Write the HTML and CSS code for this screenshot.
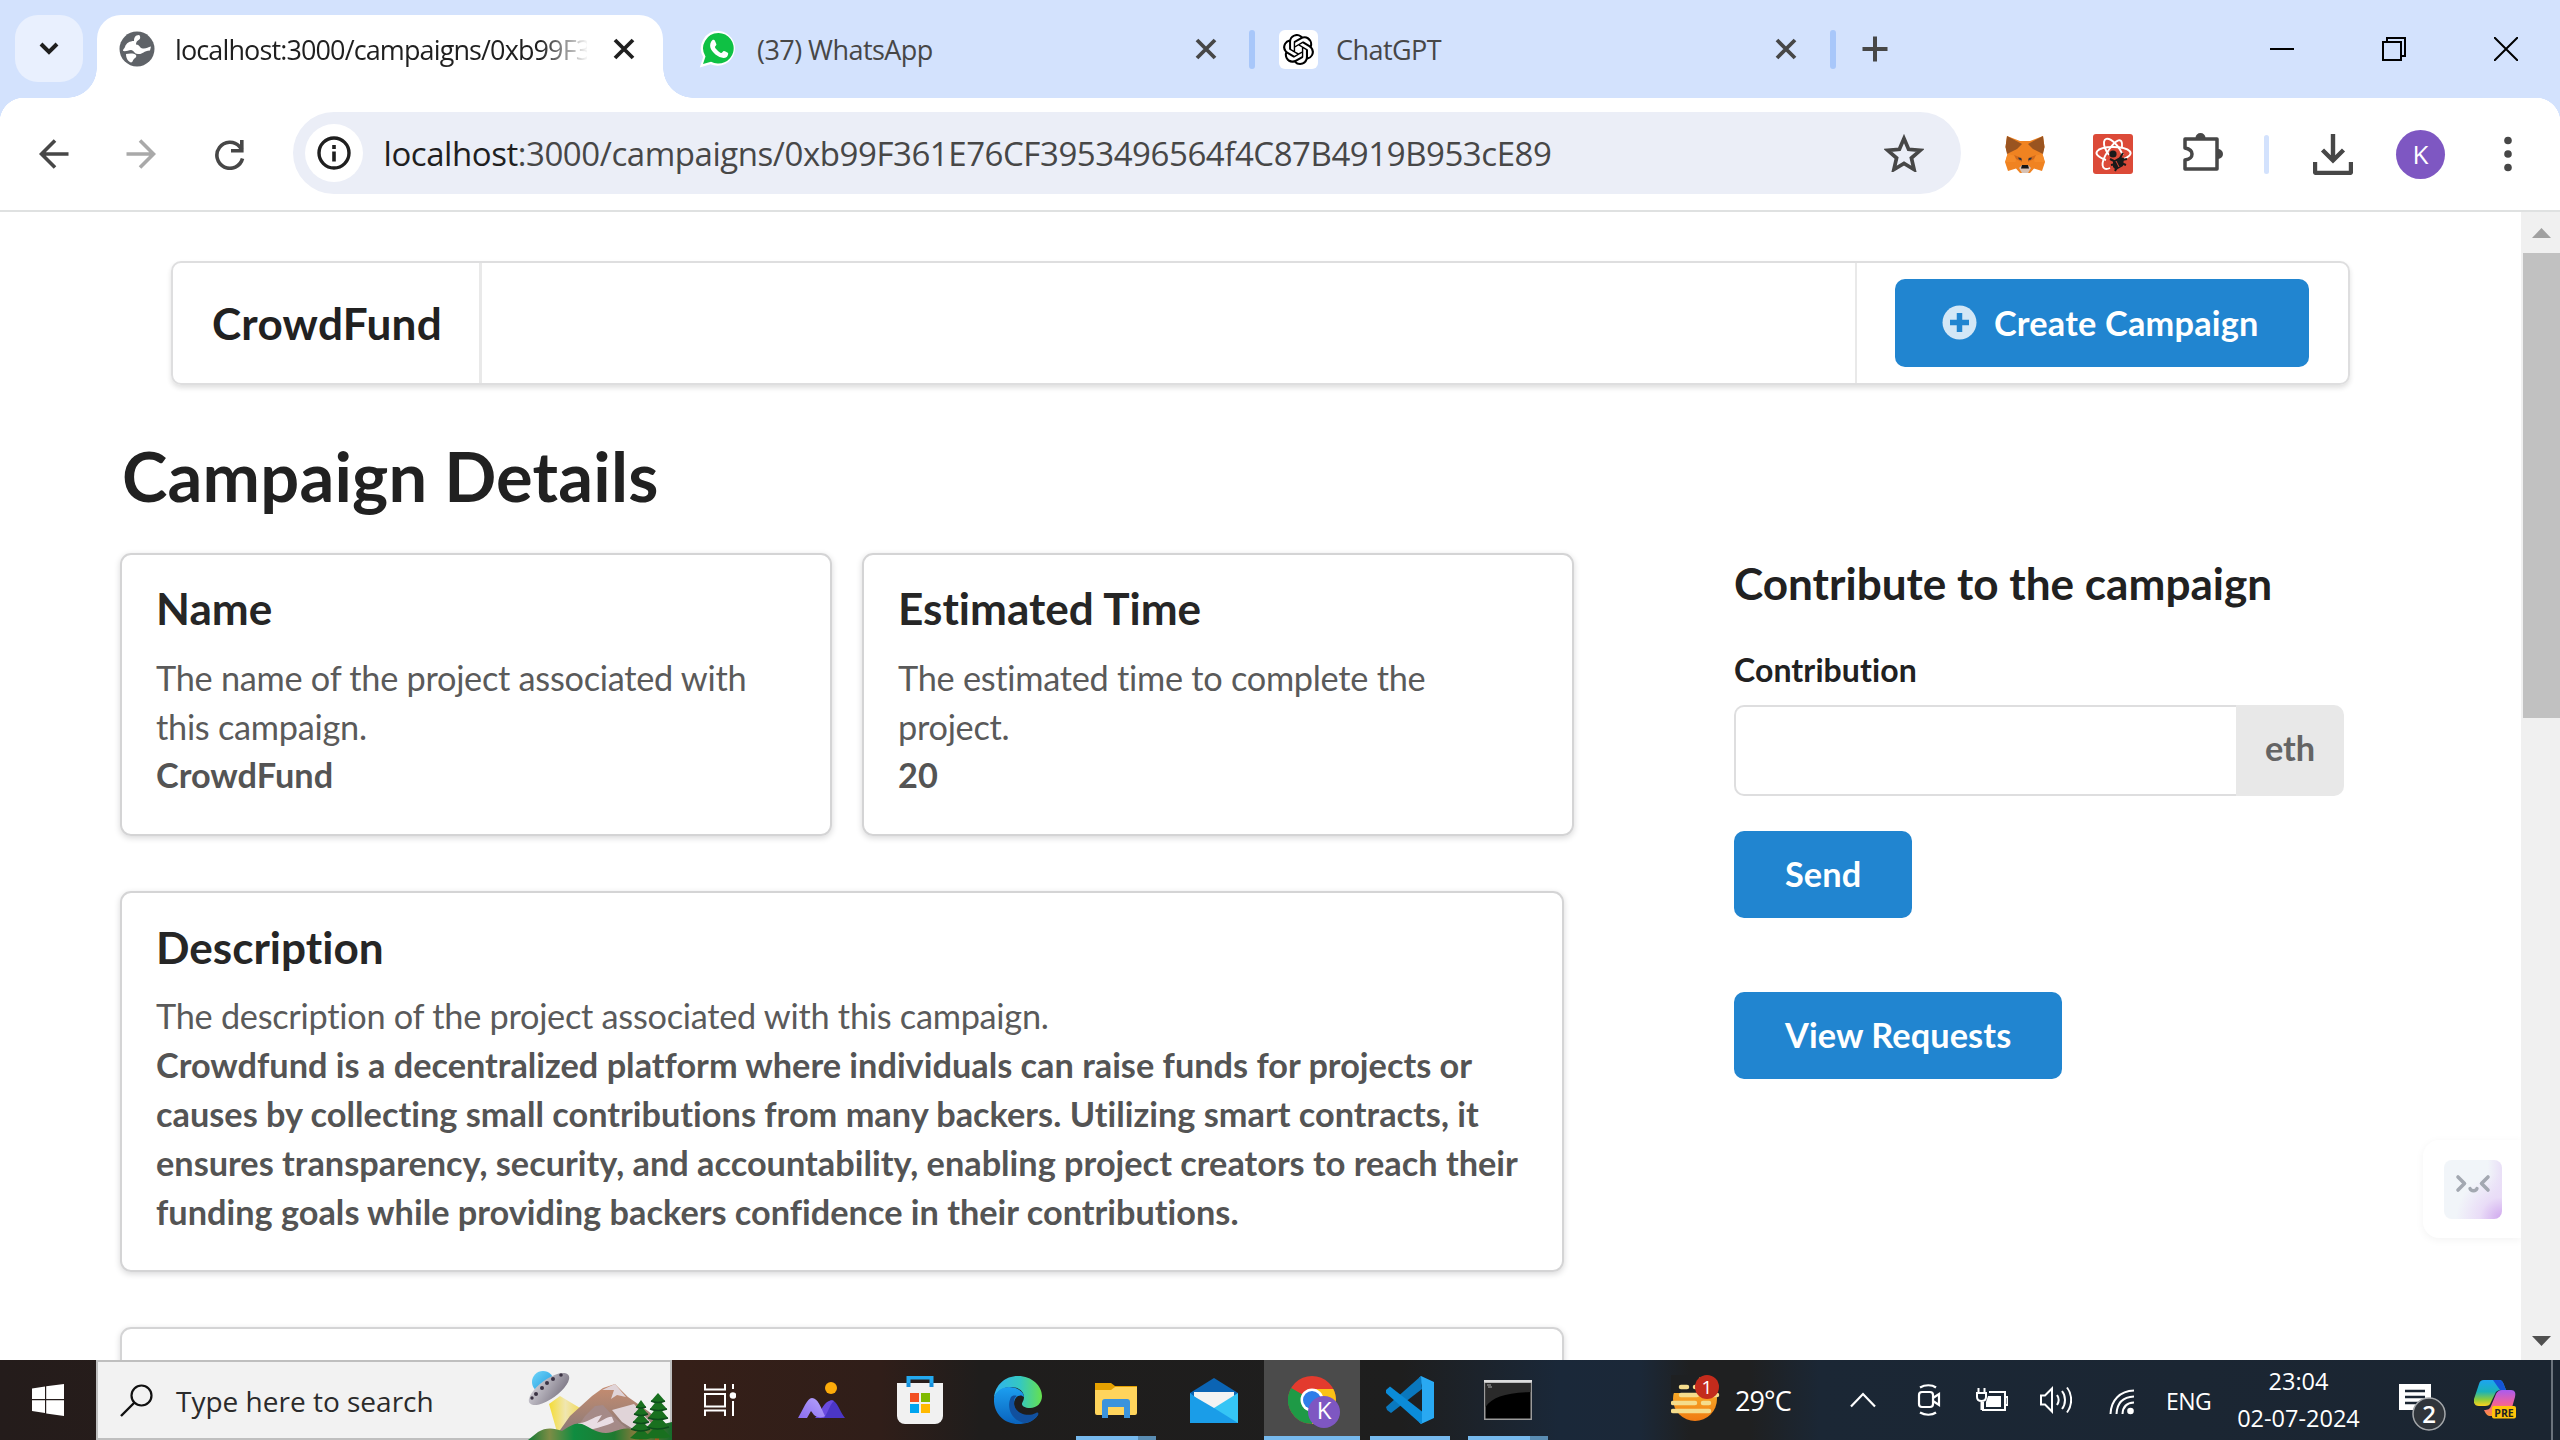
FILE: index.html
```html
<!DOCTYPE html>
<html lang="en">
<head>
<meta charset="utf-8">
<title>CrowdFund</title>
<link rel="stylesheet" href="styles.css">
</head>
<body>
<header class="strip">
  <div class="tab-search"><svg width="20" height="14" viewBox="0 0 20 14"><path d="M2 2l8 8 8-8" fill="none" stroke="#1f1f1f" stroke-width="4"/></svg></div>
  <div class="tab active">
    <svg class="favicon" width="36" height="36" viewBox="0 0 36 36"><circle cx="18" cy="18" r="17.500" fill="#5f6368"/><path d="M20 4c-4 0-5 3-5 6-4 0-8 2-9 6-1 2-2 2-2 4 3 .5 5-.5 8-1 3 0 3 4 7 4 5 .5 5-3 12-3.500l1-4c-3 .5-5 2.500-8 2-4-.5-3-4-7-4 0-4 3-4 4-6 .5-1.500 0-3-1-3.500zM7 23c3-.5 8-1 10 1 1 2-1 3-2 4-1.500 1.500-1 3-3 3.500-3-1-5-4.500-5-8.500z" fill="#fff"/></svg>
    <span class="tab-title fade">localhost:3000/campaigns/0xb99F3</span>
    <svg class="close" width="24" height="24" viewBox="0 0 24 24"><path d="M3 3l18 18M21 3L3 21" stroke="#1f1f1f" stroke-width="3.800"/></svg>
  </div>
  <div class="tab wa">
    <svg class="favicon" width="38" height="38" viewBox="0 0 38 38"><path d="M19.500.8A17.500 17.500 0 0 0 4.200 27L.8 37.500l10.600-3.200A17.500 17.500 0 1 0 19.500.8z" fill="#fff"/><path d="M19.500 3A15.300 15.300 0 0 0 6.500 26.500L4 34l8-2.300A15.300 15.300 0 1 0 19.500 3z" fill="#0fc144"/><path d="M13.300 10.200c.6-.5 2-.5 2.500.2.600 1.100 1.200 2.700 1.600 3.800.3 1-1.500 2.200-1.500 2.900 0 1.200 4.300 5.800 6.300 5.900 1 0 1.800-2.200 2.800-2.100.8.1 3.300 1.400 3.900 1.900.8.800-.1 3.300-1.100 4.100-4.800 3.600-14.900-3.300-16.500-9.600-.6-2.600.4-5.700 2-7.100z" fill="#fff"/></svg>
    <span class="tab-title">(37) WhatsApp</span>
    <svg class="close" width="24" height="24" viewBox="0 0 24 24"><path d="M3 3l18 18M21 3L3 21" stroke="#474747" stroke-width="3.800"/></svg>
  </div>
  <i class="tab-sep"></i>
  <div class="tab gpt">
    <span class="gpt-icon"><svg width="31" height="31" viewBox="0 0 24 24"><path d="M22.2819 9.8211a5.9847 5.9847 0 0 0-.5157-4.9108 6.0462 6.0462 0 0 0-6.5098-2.9A6.0651 6.0651 0 0 0 4.9807 4.1818a5.9847 5.9847 0 0 0-3.9977 2.9 6.0462 6.0462 0 0 0 .7427 7.0966 5.98 5.98 0 0 0 .511 4.9107 6.051 6.051 0 0 0 6.5146 2.9001A5.9847 5.9847 0 0 0 13.2599 24a6.0557 6.0557 0 0 0 5.7718-4.2058 5.9894 5.9894 0 0 0 3.9977-2.9001 6.0557 6.0557 0 0 0-.7475-7.0729zm-9.022 12.6081a4.4755 4.4755 0 0 1-2.8764-1.0408l.1419-.0804 4.7783-2.7582a.7948.7948 0 0 0 .3927-.6813v-6.7369l2.02 1.1686a.071.071 0 0 1 .038.052v5.5826a4.504 4.504 0 0 1-4.4945 4.4944zm-9.6607-4.1254a4.4708 4.4708 0 0 1-.5346-3.0137l.142.0852 4.783 2.7582a.7712.7712 0 0 0 .7806 0l5.8428-3.3685v2.3324a.0804.0804 0 0 1-.0332.0615L9.74 19.9502a4.4992 4.4992 0 0 1-6.1408-1.6464zM2.3408 7.8956a4.485 4.485 0 0 1 2.3655-1.9728V11.6a.7664.7664 0 0 0 .3879.6765l5.8144 3.3543-2.0201 1.1685a.0757.0757 0 0 1-.071 0l-4.8303-2.7865A4.504 4.504 0 0 1 2.3408 7.872zm16.5963 3.8558L13.1038 8.364 15.1192 7.2a.0757.0757 0 0 1 .071 0l4.8303 2.7913a4.4944 4.4944 0 0 1-.6765 8.1042v-5.6772a.79.79 0 0 0-.407-.667zm2.0107-3.0231l-.142-.0852-4.7735-2.7818a.7759.7759 0 0 0-.7854 0L9.409 9.2297V6.8974a.0662.0662 0 0 1 .0284-.0615l4.8303-2.7866a4.4992 4.4992 0 0 1 6.6802 4.66zM8.3065 12.863l-2.02-1.1638a.0804.0804 0 0 1-.038-.0567V6.0742a4.4992 4.4992 0 0 1 7.3757-3.4537l-.142.0805L8.704 5.459a.7948.7948 0 0 0-.3927.6813zm1.0976-2.3654l2.602-1.4998 2.6069 1.4998v2.9994l-2.5974 1.4997-2.6067-1.4997Z"/></svg></span>
    <span class="tab-title">ChatGPT</span>
    <svg class="close" width="24" height="24" viewBox="0 0 24 24"><path d="M3 3l18 18M21 3L3 21" stroke="#474747" stroke-width="3.800"/></svg>
  </div>
  <i class="tab-sep"></i>
  <svg class="new-tab" width="26" height="26" viewBox="0 0 26 26"><path d="M13 .5v25M.5 13h25" stroke="#474747" stroke-width="4"/></svg>
  <div class="win-controls">
    <svg width="24" height="24" viewBox="0 0 24 24"><path d="M0 12h24" stroke="#000" stroke-width="2"/></svg>
    <svg width="24" height="24" viewBox="0 0 24 24"><path d="M1 5h18v18H1zM5 5V1h18v18h-4" fill="none" stroke="#000" stroke-width="2"/></svg>
    <svg width="24" height="24" viewBox="0 0 24 24"><path d="M0 0l24 24M24 0L0 24" stroke="#000" stroke-width="2"/></svg>
  </div>
</header>

<nav class="toolbar">
  <svg class="back" width="30" height="30" viewBox="0 0 30 30"><path d="M29.500 15H3M16 1.500L2.500 15 16 28.500" fill="none" stroke="#474747" stroke-width="3.600"/></svg>
  <svg class="fwd" width="30" height="30" viewBox="0 0 30 30"><path d="M.5 15H27M14 1.500L27.500 15 14 28.500" fill="none" stroke="#a9a9a9" stroke-width="3.600"/></svg>
  <svg class="reload" width="31" height="31" viewBox="0 0 31 31"><path d="M28.500 19.500A13 13 0 1 1 25.500 7.500L28 10.500" fill="none" stroke="#474747" stroke-width="3.600"/><path d="M17 13.500V10h9V1h3.600v12.500z" fill="#474747"/></svg>
  <div class="omnibox">
    <span class="site-info"><svg width="34" height="34" viewBox="0 0 34 34"><circle cx="17" cy="17" r="15" fill="none" stroke="#1f1f1f" stroke-width="3.400"/><path d="M17 15.500V25.500M17 9v4" stroke="#1f1f1f" stroke-width="3.600"/></svg></span>
    <span class="url"><b>localhost</b>:3000/campaigns/0xb99F361E76CF3953496564f4C87B4919B953cE89</span>
    <svg class="star" width="40" height="38" viewBox="0 0 40 38"><path d="M20 4.500l4.600 10.800 11.700 1-8.900 7.700 2.700 11.500L20 29.400 9.900 35.500 12.600 24l-8.900-7.700 11.700-1z" fill="none" stroke="#474747" stroke-width="3.700"/></svg>
  </div>
  <svg class="fox" width="40" height="37" viewBox="0 0 40 37"><path d="M2 0l13 5h10L38 0l1.500 11-2 7 2.500 8-3 9-8-2.500-4 4.500h-10l-4-4.500L3 35l-3-9 2.500-8-2-7z" fill="#f08321"/><path d="M2 0l15 8-5 5-10 5-1.500-7zM38 0L23 8l5 5 10 5 1.500-7z" fill="#9a5420"/><path d="M2.500 18l9 2-1 6-10 0zM37.500 18l-9 2 1 6 10 0z" fill="#f58b28"/><path d="M9 19l8 3v4l-6-3zM31 19l-8 3v4l6-3z" fill="#d36a1b"/><path d="M13 21.500l3 .5 1 2.500-3-1zM27 21.500l-3 .5-1 2.500 3-1z" fill="#2a3442"/><path d="M14 32l3-3h6l3 3-3 5h-6z" fill="#d7c1b3"/><path d="M17 29h6l1 3.500h-8z" fill="#161616"/></svg>
  <svg class="react" width="40" height="40" viewBox="0 0 40 40"><rect width="40" height="40" rx="3" fill="#dc4a38"/><g fill="none" stroke="#fff" stroke-width="1.900"><path d="M13 26C-4 20 4 13 20 13s26 7 8 13"/><path d="M17 34c-9 4-10-5-2-17S30 2 29 13"/><path d="M30 21C22 5 12 1 11 8c-.5 5 2 9 5 13"/></g><circle cx="20" cy="20" r="3.600" fill="#1a1a1a"/><path d="M20 27l7-4 4 1-1 8-7 4-3-3z" fill="#1a1a1a"/><path d="M17 25l6 3M18 31l5-1M22 37l2-4M30 19l-3 5M34 25l-5 1M33 31l-5-2" stroke="#1a1a1a" stroke-width="2"/><path d="M23 27l3 6" stroke="#dc4a38" stroke-width="1"/></svg>
  <svg class="puzzle" width="40" height="40" viewBox="0 0 40 40"><path d="M12.500 6a5 5 0 0 1 10 0M35 17a5 5 0 0 1 0 10" fill="#474747"/><path d="M3.500 7h30.500v30H2v-9c6-1 7-3 7-6s-2-5-7-6V7z" fill="none" stroke="#474747" stroke-width="3.500" stroke-linejoin="round"/></svg>
  <i class="bar-sep"></i>
  <svg class="download" width="40" height="41" viewBox="0 0 40 41"><path d="M20 0v25M9.500 16L20 26.500 30.500 16M2 28v9.500a1.500 1.500 0 0 0 1.500 1.500h33a1.500 1.500 0 0 0 1.500-1.500V28" fill="none" stroke="#474747" stroke-width="4.400"/></svg>
  <span class="avatar">K</span>
  <svg class="dots" width="8" height="36" viewBox="0 0 8 36"><circle cx="4" cy="4.500" r="3.800" fill="#474747"/><circle cx="4" cy="18" r="3.800" fill="#474747"/><circle cx="4" cy="31.500" r="3.800" fill="#474747"/></svg>
</nav>

<div class="viewport">
  <main class="page">
    <div class="menu">
      <a class="brand">CrowdFund</a>
      <div class="menu-right">
        <button class="btn create"><svg width="35" height="35" viewBox="0 0 35 35"><circle cx="17.500" cy="17.500" r="17" fill="#d3e7f6"/><path d="M17.500 8v19M8 17.500h19" stroke="#2185d0" stroke-width="5.500"/></svg>Create Campaign</button>
      </div>
    </div>
    <h1>Campaign Details</h1>
    <div class="columns">
      <section class="cards">
        <div class="card-row">
          <article class="card small"><h3>Name</h3><p>The name of the project associated with this campaign.</p><strong>CrowdFund</strong></article>
          <article class="card small"><h3>Estimated Time</h3><p>The estimated time to complete the project.</p><strong>20</strong></article>
        </div>
        <article class="card wide"><h3>Description</h3><p>The description of the project associated with this campaign.</p><strong>Crowdfund is a decentralized platform where individuals can raise funds for projects or causes by collecting small contributions from many backers. Utilizing smart contracts, it ensures transparency, security, and accountability, enabling project creators to reach their funding goals while providing backers confidence in their contributions.</strong></article>
        <article class="card wide"></article>
      </section>
      <form class="contribute">
        <h3>Contribute to the campaign</h3>
        <label>Contribution</label>
        <div class="field"><span class="input"></span><span class="unit">eth</span></div>
        <button class="btn send" type="button">Send</button>
        <button class="btn view" type="button">View Requests</button>
      </form>
    </div>
    <div class="assistant"><span class="face"><svg width="58" height="59" viewBox="0 0 58 59"><path d="M14 17l6.500 6.500L14 30M44 17l-6.500 6.500L44 30" fill="none" stroke="#a3a8b1" stroke-width="3.600" stroke-linecap="round" stroke-linejoin="round"/><path d="M26 28.500c1 3 6 3 7 0" fill="none" stroke="#a3a8b1" stroke-width="3.400" stroke-linecap="round"/></svg></span></div>
  </main>
  <aside class="scrollbar">
    <svg width="19" height="10" viewBox="0 0 19 10"><path d="M9.500 0L19 10H0z" fill="#a0a0a0"/></svg>
    <i class="thumb"></i>
    <svg class="down" width="19" height="10" viewBox="0 0 19 10"><path d="M0 0h19L9.500 10z" fill="#505050"/></svg>
  </aside>
</div>

<footer class="taskbar">
  <div class="start"><svg width="32" height="32" viewBox="0 0 32 32"><path d="M0 4.500l13-2V15H0zM14.200 2.300L32 0v15H14.200zM0 16.300h13V29L0 27zM14.200 16.300H32V32l-17.800-2.500z" fill="#fff"/></svg></div>
  <div class="search">
    <svg width="33" height="33" viewBox="0 0 33 33"><circle cx="21.500" cy="11.500" r="10" fill="none" stroke="#111" stroke-width="2.200"/><path d="M14.500 18.500L1 32" stroke="#111" stroke-width="2.400"/></svg>
    <span>Type here to search</span>
    <svg class="scene" width="144" height="72" viewBox="0 0 144 72">
      <defs>
        <linearGradient id="rock" x1="0" y1="0" x2="0" y2="1"><stop offset="0" stop-color="#c88d6f"/><stop offset="1" stop-color="#82787a"/></linearGradient>
        <linearGradient id="hill"><stop offset="0" stop-color="#127a34"/><stop offset=".15" stop-color="#7d8c45"/><stop offset=".32" stop-color="#0f8c40"/><stop offset=".6" stop-color="#1f7a30"/><stop offset=".75" stop-color="#8a7a3c"/><stop offset="1" stop-color="#156b2a"/></linearGradient>
        <linearGradient id="beam"><stop offset="0" stop-color="#f4dc33"/><stop offset=".4" stop-color="#f0e6b0"/><stop offset="1" stop-color="#f3d427"/></linearGradient>
        <linearGradient id="ufo" x1="0" y1="0" x2="1" y2="1"><stop offset="0" stop-color="#d5d3da"/><stop offset="1" stop-color="#77717f"/></linearGradient>
        <linearGradient id="dome" x1="0" y1="0" x2="1" y2="1"><stop offset="0" stop-color="#6fd6fb"/><stop offset="1" stop-color="#1b93d8"/></linearGradient>
      </defs>
      <path d="M21 36l11-8 30 18-31 25z" fill="url(#beam)"/>
      <path d="M25 72L42 48l22-20 11-8 12-4 13 13 20 14 24 20v9z" fill="url(#rock)"/>
      <path d="M87 16l-13 6 12 0-3 9 6-4 9 2zM84 42l22-6 18 20-8 12-22-14z" fill="#e0d4d8"/>
      <path d="M49 60l8-12 10-10 8-1 11 12 20 18H60z" fill="#a58a88"/>
      <path d="M50 55c8 1 14-6 24-8l-5 8c5-2 11-7 15-6l2 5c-8 4-18 6-24 8-5 0-11-3-12-7z" fill="#e9dde4"/>
      <path d="M0 72l10-8c8-5 16-4 24-1 8-5 14-9 20-7 8 3 14 9 24 9 9 0 14-6 25-4l13 2 15-6 13-3v18z" fill="url(#hill)"/>
      <path d="M113 40v32M129 36v36" stroke="#9d5a22" stroke-width="4"/>
      <path d="M113 32l5 7q-5 2-10 0zM113 38l7 8q-7 3-14 0zM113 45l8 9q-8 3-16 0zM113 52l9 9q-9 4-19 0zM113 60l11 10q-11 3-22 0zM130 25l7 8q-7 3-14 0zM130 31l9 10q-9 3-17 0zM130 38l10 12q-10 3-20 0zM130 47l11 12q-12 4-22 0zM130 56l13 13q-13 3-26 0z" fill="#19701f"/>
      <path d="M108 39q5 2 10 0M106 46q7 3 14 0M105 54q8 3 16 0M103 61q10 4 19 0M123 33q7 3 14 0M122 41q8 3 17 0M120 50q10 3 20 0M119 59q10 4 22 0" fill="none" stroke="#0e4d1c" stroke-width="1.500"/>
      <circle cx="15" cy="14" r="11" fill="url(#dome)"/>
      <ellipse cx="21" cy="21" rx="24" ry="9.500" transform="rotate(-36 21 21)" fill="url(#ufo)"/>
      <g fill="#3b3344"><circle cx="4" cy="30" r="1.700"/><circle cx="8" cy="26" r="2"/><circle cx="14" cy="20" r="2"/><circle cx="19" cy="15" r="2"/><circle cx="25" cy="11" r="2"/><circle cx="33" cy="7" r="1.800"/></g>
    </svg>
  </div>
  <div class="slot view-slot"><svg width="32" height="32" viewBox="0 0 32 32"><path d="M1 0v5.500h20V0M1 32v-5.500h20V32M1 10h20v12.500H1zM29 0v5M29 17v15" fill="none" stroke="#fff" stroke-width="2"/><circle cx="29" cy="11.500" r="3.300" fill="#fff"/></svg></div>
  <div class="slot"><svg width="48" height="36" viewBox="0 0 48 36"><defs><linearGradient id="m1" x1="0" y1="1" x2="1" y2="0"><stop offset="0" stop-color="#8a6cf0"/><stop offset="1" stop-color="#b7a5fb"/></linearGradient></defs><circle cx="33" cy="6" r="6" fill="#fdab0a"/><path d="M24 36c3-9 5-16 9-18 6 0 9 12 14 18z" fill="#4b36c6"/><path d="M17 36h9c5-7 6-14 10-17-9-3-12 10-19 17z" fill="#6a4be0"/><path d="M0 36c5-8 9-20 14-20 6 0 9 10 13 18-2 2-8 2-11-1l-3-4-4 7z" fill="url(#m1)"/></svg></div>
  <div class="slot"><svg width="46" height="48" viewBox="0 0 46 48"><path d="M11.500 9V1.500h23V9" fill="none" stroke="#23a9f0" stroke-width="4"/><path d="M0 7h46v33a8 8 0 0 1-8 8H8a8 8 0 0 1-8-8z" fill="#f1f1f1"/><path d="M9.500 7v4h4V7zM32.500 7v4h4V7z" fill="#1590dd"/><path d="M13 17h9v9h-9z" fill="#f25022"/><path d="M24 17h9v9h-9z" fill="#7fba00"/><path d="M13 28h9v9h-9z" fill="#00a4ef"/><path d="M24 28h9v9h-9z" fill="#ffb900"/></svg></div>
  <div class="slot"><svg width="48" height="48" viewBox="0 0 48 48"><defs><linearGradient id="e1"><stop offset="0" stop-color="#2fb2f0"/><stop offset=".55" stop-color="#35c8c0"/><stop offset="1" stop-color="#66e04e"/></linearGradient><linearGradient id="e2" x1="0" y1="0" x2="0" y2="1"><stop offset="0" stop-color="#1c9ff0"/><stop offset="1" stop-color="#0a63bd"/></linearGradient></defs><path d="M0 22C1 9 11 0 24 0c14 0 24 10 24 20 0 7-5 12-12 12-5 0-8-2-8-4s2-3 2-7c0-6-6-10-13-10C9 11 3 15 0 22z" fill="url(#e1)"/><path d="M0 22c2-7 8-11 15-11 9 0 15 5 15 10-4-4-10 0-10 7 0 9 8 13 15 13 4 0 7-1 9-2-5 7-12 9-20 9C10 48-1 37 0 22z" fill="url(#e2)"/><path d="M17 21c-5 10 0 24 14 26 6-1 10-4 13-8 1-2 0-3-2-2-10 5-22-1-22-10 0-3 0-5 3-7-3-1-5 0-6 1z" fill="#11509e"/></svg></div>
  <div class="slot"><svg width="42" height="36" viewBox="0 0 42 36"><path d="M0 1h16l4 3h22v6H0z" fill="#e6a100"/><path d="M0 8h16l4-3h22v26a2 2 0 0 1-2 2H2a2 2 0 0 1-2-2z" fill="#ffd45c"/><path d="M7 36V20a3 3 0 0 1 3-3h22a3 3 0 0 1 3 3v16h-6V25H13v11z" fill="#3b93dc"/></svg><u class="run multi"></u></div>
  <div class="slot"><svg width="48" height="45" viewBox="0 0 48 45"><path d="M0 15L24 0l24 15v5H0z" fill="#0b64b4"/><path d="M4 14h40v10L24 34 4 24z" fill="#f3f3f3"/><path d="M0 15l24 20-24 10z" fill="#1ba0ec"/><path d="M48 15L0 45h48z" fill="#35c5f5"/><path d="M0 45h48L24 30 0 16z" fill="#1a9de8"/></svg></div>
  <div class="slot"><span class="active-app"><svg width="52" height="52" viewBox="0 0 52 52"><circle cx="24" cy="24" r="24" fill="#e33b2e"/><path d="M24 24L3.200 12A24 24 0 0 0 24 48l10-18z" fill="#1e9a46"/><path d="M24 13h21.300A24 24 0 0 1 24 48l10-18z" fill="#fbc116"/><circle cx="24" cy="24" r="11.500" fill="#fff"/><circle cx="24" cy="24" r="9" fill="#2f7de9"/><circle cx="36" cy="36" r="16" fill="#7e57c2"/><text x="36" y="43" text-anchor="middle" class="badge-k">K</text></svg></span><u class="run full"></u></div>
  <div class="slot"><svg width="48" height="48" viewBox="0 0 48 48"><path d="M35 0l13 6v36l-13 6-2-2 3-7V10l-3-8z" fill="#29a9f2"/><path d="M35 0L0 31l1 3 4 3 31-24z" fill="#0a78be"/><path d="M0 14l4-3.500 32 25V47l-1 1L0 17z" fill="#0b8cd9"/></svg><u class="run"></u></div>
  <div class="slot"><svg width="48" height="40" viewBox="0 0 48 40"><path d="M0 0h48v40H0z" fill="#9b9b9b"/><path d="M1.500 3h45v35.500h-45z" fill="#000"/><path d="M1.500 3h45v9C22 13 8 17 1.500 27z" fill="#2a2a2a"/><path d="M0 0h48v2.500H0z" fill="#ddd"/><path d="M3 5h4M4 7h4" stroke="#aaa" stroke-width="1"/></svg><u class="run multi"></u></div>
  <div class="weather"><svg width="50" height="48" viewBox="0 0 50 48"><defs><linearGradient id="sun" x1="0" y1="0" x2="0" y2="1"><stop offset="0" stop-color="#fbc233"/><stop offset="1" stop-color="#f07a12"/></linearGradient></defs><circle cx="24" cy="24" r="22" fill="url(#sun)"/><path d="M0 0h28v18H0z" fill="#1e2022"/><path d="M10 12h6M24 12h4M10 20h16M42 20h4M2 28h22M32 28h6M2 36h36" stroke="#f5dc8c" stroke-width="4.500" stroke-linecap="round"/><circle cx="36" cy="12" r="12" fill="#c42b1c"/><text x="36" y="19" text-anchor="middle" class="badge-1">1</text></svg></div>
  <span class="temp">29°C</span>
  <svg class="t-chev" width="26" height="16" viewBox="0 0 26 16"><path d="M1 14.500L13 2l12 12.500" fill="none" stroke="#fff" stroke-width="2.200"/></svg>
  <svg class="t-cam" width="24" height="32" viewBox="0 0 24 32"><path d="M3 3.500C8 .5 15 .5 19 3.500M3 28.500c5 3 12 3 16 0M5 8h8a3 3 0 0 1 3 3v9a3 3 0 0 1-3 3H5a3 3 0 0 1-3-3v-9a3 3 0 0 1 3-3zM16 14l6-4v11l-6-4" fill="none" stroke="#fff" stroke-width="2.200"/></svg>
  <svg class="t-bat" width="32" height="24" viewBox="0 0 32 24"><path d="M13 4h16v18H7v-8M29 9h2.500v8H29M2.500 0v5M8.500 0v5M1 5h9v4c0 3-2 4-4.500 4S1 12 1 9zM5.500 13v9" fill="none" stroke="#fff" stroke-width="2"/><path d="M12 8h13v11H10v-5z" fill="#fff"/></svg>
  <svg class="t-vol" width="32" height="28" viewBox="0 0 32 28"><path d="M1 9.500h4l7-7v23l-7-7H1zM17 9c2 3 2 7 0 10M22 5c4 5 4 13 0 18M27 1.500c5.500 7 5.500 18 0 25" fill="none" stroke="#fff" stroke-width="2"/></svg>
  <svg class="t-wifi" width="26" height="26" viewBox="0 0 26 26"><path d="M1.500 25C2 11 11 2 25 1.500M7.500 25C8 14 14 8 25 7.500M13.500 25c.3-7 4-11.200 11.500-11.500" fill="none" stroke="#fff" stroke-width="2"/><circle cx="21.500" cy="22" r="3.300" fill="#fff"/></svg>
  <span class="lang">ENG</span>
  <div class="clock"><span>23:04</span><span>02-07-2024</span></div>
  <svg class="t-note" width="50" height="48" viewBox="0 0 50 48"><path d="M0 0h32v26H20l-6 6v-6H0z" fill="#fff"/><path d="M6 7h20M6 13h20M6 19h14" stroke="#1b2633" stroke-width="2.300"/><circle cx="30" cy="30" r="16" fill="#30353b" stroke="#a5a8ab" stroke-width="1.500"/><text x="30" y="39" text-anchor="middle" class="badge-2">2</text></svg>
  <svg class="t-copilot" width="42" height="40" viewBox="0 0 42 40"><defs><linearGradient id="c1" x1="0" y1="0" x2="0" y2="1"><stop offset="0" stop-color="#1da4f2"/><stop offset=".45" stop-color="#1bb2b8"/><stop offset=".75" stop-color="#8ccb3c"/><stop offset="1" stop-color="#ffd21e"/></linearGradient><linearGradient id="c2" x1="0" y1="0" x2="0" y2="1"><stop offset="0" stop-color="#a95cf0"/><stop offset=".5" stop-color="#f0609e"/><stop offset="1" stop-color="#ff9238"/></linearGradient></defs><path d="M10 30c4 0 6-1 7-4l5-12c1-2 3-4 6-4h9c4 0 5 3 4 7l-4 14c-1 4-3 5-6 5H17c-4 0-5-2-7-6z" fill="url(#c2)"/><path d="M10 0h15c3 0 4 2 5 5l2 5h-5c-3 0-5 1-6 4l-4 8c-1 3-3 4-6 4H5c-4 0-6-3-5-7L5 4c1-3 2-4 5-4z" fill="url(#c1)"/><path d="M19 0h6c3 0 4 2 5 5l2 5h-6z" fill="#1554d6"/><rect x="18" y="26" width="24" height="12.500" rx="2" fill="#ffc40a"/><text x="30" y="36.500" text-anchor="middle" class="badge-pre">PRE</text></svg>
  <i class="show-desktop"></i>
</footer>
</body>
</html>
```
FILE: styles.css
```css
* { box-sizing: border-box; }
body { margin: 0; width: 2560px; height: 1440px; overflow: hidden; display: flex; flex-direction: column; background: #fff; font-family: "Open Sans", "Noto Sans", sans-serif; }
svg { display: block; flex: none; }
h1, h3, p { margin: 0; }

/* Tab strip */
.strip { height: 98px; flex: none; background: #d3e2fd; display: flex; align-items: flex-start; padding: 15px 42px 0 15px; }
.tab-search { width: 68px; height: 67px; border-radius: 23px; background: #e9f0fe; display: flex; align-items: center; justify-content: center; flex: none; }
.tab { height: 68px; display: flex; align-items: center; flex: none; color: #474747; font-size: 27px; letter-spacing: -.55px; }
.tab.active { position: relative; width: 566px; height: 83px; margin-left: 14px; padding: 0 0 15px 22px; background: #fff; border-radius: 24px 24px 0 0; color: #1f1f1f; }
.tab.active::before, .tab.active::after { content: ""; position: absolute; bottom: 0; width: 30px; height: 30px; }
.tab.active::before { left: -30px; background: radial-gradient(circle at 0 0, transparent 29.500px, #fff 30px); }
.tab.active::after { right: -30px; background: radial-gradient(circle at 100% 0, transparent 29.500px, #fff 30px); }
.tab-title { flex: 1; white-space: nowrap; margin-left: 20px; }
.tab-title.fade { flex: none; width: 412px; letter-spacing: -.88px; -webkit-mask-image: linear-gradient(90deg, #000 365px, transparent 414px); mask-image: linear-gradient(90deg, #000 365px, transparent 414px); }
.tab.active .close { margin-left: 25px; }
.tab.wa { width: 586px; padding: 0 31px 0 36px; }
.tab.gpt { width: 575px; padding: 0 32px 0 24px; }
.tab.gpt .tab-title { margin-left: 18px; }
.gpt-icon { width: 39px; height: 39px; border-radius: 6px; background: #fff; display: flex; align-items: center; justify-content: center; }
.tab-sep { width: 6px; height: 39px; margin-top: 15px; border-radius: 3px; background: #a8c7fa; flex: none; }
.new-tab { margin: 21px 0 0 26px; }
.win-controls { margin-left: auto; display: flex; gap: 88px; padding-top: 22px; }

/* Address bar */
.toolbar { height: 114px; flex: none; display: flex; align-items: center; border-bottom: 2px solid #dfe1e1; background: radial-gradient(circle at 24px 24px, #fff 24px, #d3e2fd 24.500px) 0 0 / 24px 24px no-repeat, radial-gradient(circle at 0 24px, #fff 24px, #d3e2fd 24.500px) 100% 0 / 24px 24px no-repeat, #fff; }
.back { margin-left: 39px; }
.fwd { margin-left: 57px; }
.reload { margin-left: 58px; }
.omnibox { width: 1668px; height: 82px; margin: 0 0 2px 48px; border-radius: 41px; background: #ebeef7; display: flex; align-items: center; padding: 0 37px 0 12px; flex: none; }
.site-info { width: 58px; height: 58px; border-radius: 50%; background: #fff; display: flex; align-items: center; justify-content: center; flex: none; }
.url { flex: 1; margin-left: 20.500px; font-size: 33px; letter-spacing: -.44px; color: #474747; white-space: nowrap; }
.url b { font-weight: 400; color: #1f1f1f; }
.fox { margin-left: 44px; }
.react { margin-left: 48px; }
.puzzle { margin: 0 0 5px 50px; }
.bar-sep { width: 5px; height: 39px; margin-left: 41px; border-radius: 3px; background: #d3e2fd; }
.download { margin-left: 44px; }
.avatar { width: 49px; height: 49px; margin-left: 43px; border-radius: 50%; background: #7e57c2; color: #fff; font-size: 26px; line-height: 49px; text-align: center; }
.dots { margin-left: 59px; }

/* Page */
.viewport { flex: 1; min-height: 0; display: flex; }
.page { position: relative; width: 2521px; overflow: hidden; font-family: Lato, sans-serif; font-variant-ligatures: none; color: #212121; font-size: 34.300px; }
.menu { width: 2179px; height: 124px; margin: 49px 0 0 171px; display: flex; justify-content: space-between; border: 2px solid #dededf; border-radius: 10px; box-shadow: 0 3px 5px rgba(34, 36, 38, .14); }
.brand { width: 309px; padding-left: 39px; line-height: 120px; border-right: 3px solid #e9e9e9; font-size: 44.100px; font-weight: 700; letter-spacing: .25px; }
.menu-right { width: 493px; padding: 16px 0 0 38px; border-left: 2px solid #e9e9e9; }
.btn { display: flex; align-items: center; height: 87px; padding: 0 51px 2px; border: 0; border-radius: 10px; background: #2185d0; color: #fff; font: 700 34.300px Lato, sans-serif; font-variant-ligatures: none; letter-spacing: .1px; white-space: nowrap; }
.create { width: 414px; height: 88px; padding: 0 0 1px 47px; gap: 17px; letter-spacing: .2px; }
h1 { margin: 47px 0 0 122px; font-size: 68.600px; line-height: 88px; letter-spacing: .2px; }
h3 { font-size: 44.100px; line-height: 56px; }
.columns { display: flex; margin-top: 33px; padding-left: 120px; }
.cards { width: 1454px; display: flex; flex-direction: column; gap: 55px; }
.card-row { display: flex; gap: 30px; }
.card { padding: 25px 34px; border: 2px solid #d4d4d5; border-radius: 11px; box-shadow: 0 2px 6px #d8d8d9; line-height: 49px; color: #545454; }
.card h3 { margin-bottom: 17px; color: #262626; }
.card p { letter-spacing: -.27px; color: #5a5a5a; }
.small { width: 712px; height: 283px; }
.small strong { display: block; margin-top: -1px; }
.wide { width: 1444px; height: 381px; }
.wide h3 { margin: 1px 0 16px; }
.contribute { margin-left: 160px; padding-top: 2px; }
.contribute label { display: block; margin-top: 37px; font-size: 32px; font-weight: 700; line-height: 44px; letter-spacing: .1px; }
.field { display: flex; width: 610px; height: 91px; margin-top: 13px; }
.input { flex: 1; border: 2px solid #dededf; border-right: 0; border-radius: 10px 0 0 10px; }
.unit { width: 108px; background: #e8e8e8; border-radius: 0 10px 10px 0; color: #646464; font-weight: 700; line-height: 86px; text-align: center; }
.send { margin-top: 35px; }
.view { margin-top: 74px; }
.assistant { position: absolute; right: 0; top: 928px; width: 98px; height: 98px; padding: 20px 19px 20px 21px; border-radius: 16px 0 0 16px; background: #fff; box-shadow: 0 2px 8px rgba(0, 0, 0, .05); }
.face { display: block; width: 58px; height: 59px; border-radius: 8px; background: radial-gradient(circle at 100% 100%, #cfa6ee 0, #e9dcf7 22px, rgba(241, 245, 249, 0) 46px), linear-gradient(90deg, #f1f5f9 75%, #e9dff7); }

/* Scrollbar */
.scrollbar { width: 39px; background: #f0f0f0; display: flex; flex-direction: column; align-items: flex-end; padding: 16px 0 14px; }
.scrollbar svg { margin-right: 9px; }
.thumb { width: 37px; height: 465px; margin-top: 15px; background: #c1c1c1; }
.scrollbar .down { margin-top: auto; }

/* Taskbar */
.taskbar { height: 80px; flex: none; display: flex; align-items: center; color: #fff; background: linear-gradient(90deg, #241c1b 0, #2b1d19 400px, #351f18 680px, #301e19 880px, #1f1d1c 980px, #1e1e1e 1400px, #1a2839 1560px, #1b2838 1640px, #1f2021 1690px, #1f2021 1750px, #1b2735 1820px, #1b2531 2560px); }
.start { width: 96px; padding-left: 32px; }
.search { width: 576px; height: 80px; flex: none; background: #f2f2f2; border: 2px solid #bfbfbf; display: flex; align-items: center; padding-left: 22px; color: #2b2b2b; font-size: 28px; }
.search span { margin: 1px 0 0 23px; flex: 1; white-space: nowrap; }
.scene { align-self: flex-end; margin: 0 -2px -2px 0; }
.slot { position: relative; width: 98px; height: 80px; display: flex; align-items: center; justify-content: center; flex: none; }
.view-slot { width: 101px; padding-right: 5px; }
.active-app { width: 96px; height: 80px; background: #4b4b4b; padding: 16px 0 0 24px; }
.run { position: absolute; left: 9px; bottom: 0; width: 80px; height: 4px; background: #76b9ed; }
.run.multi { background: linear-gradient(90deg, #76b9ed 62px, #5a8db3 62px); }
.run.full { left: 1px; width: 96px; }
.weather { margin: 0 0 2px 114px; }
.temp { width: 129px; padding-left: 14px; font-size: 27px; letter-spacing: -.9px; }
.t-cam { margin-left: 41px; }
.t-bat { margin-left: 35px; }
.t-vol { margin-left: 32px; }
.t-wifi { margin: 4px 0 0 37px; }
.lang { width: 71px; margin: 1px 0 0 31px; font-size: 23px; letter-spacing: -.5px; }
.clock { width: 123px; display: flex; flex-direction: column; align-items: center; font-size: 23.500px; line-height: 37px; white-space: nowrap; }
.t-note { margin: 16px 0 0 39px; }
.t-copilot { margin-left: 25px; }
.show-desktop { width: 2px; height: 80px; margin-left: 35px; background: #6b737c; }
.badge-k { font: 24px "Open Sans", sans-serif; fill: #fff; }
.badge-1 { font: 19px "Open Sans", sans-serif; fill: #fff; }
.badge-2 { font: 600 24px "Open Sans", sans-serif; fill: #fff; }
.badge-pre { font: 700 10.500px "Open Sans", sans-serif; fill: #222; }
```
